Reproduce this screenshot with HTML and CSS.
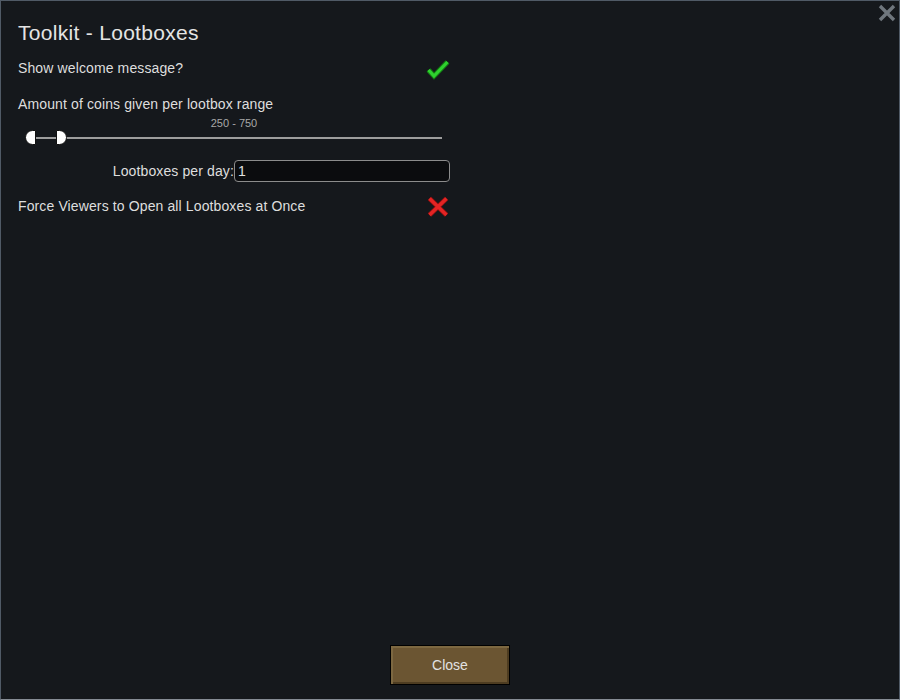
FILE: index.html
```html
<!DOCTYPE html>
<html>
<head>
<meta charset="utf-8">
<title>Toolkit - Lootboxes</title>
<link rel="stylesheet" href="styles.css">
</head>
<body>
<div class="window">
  <button class="close-x" aria-label="Close">
    <svg width="18" height="18" viewBox="0 0 18 18"><path d="M2 2 L16 16 M16 2 L2 16" stroke="#6f767d" stroke-width="3.4" stroke-linecap="butt"/></svg>
  </button>
  <div class="content">
    <h1 class="title">Toolkit - Lootboxes</h1>
    <div class="row row-first">
      <span class="label">Show welcome message?</span>
      <svg class="icon" width="24" height="24" viewBox="0 0 24 24">
        <polyline points="2.5,14 8,20 21.5,6" fill="none" stroke="#137a13" stroke-width="5.2" stroke-linejoin="miter"/>
        <polyline points="2.5,14 8,20 21.5,6" fill="none" stroke="#2fd12f" stroke-width="3.2" stroke-linejoin="miter"/>
      </svg>
    </div>
    <div class="row row-gap">
      <span class="label">Amount of coins given per lootbox range</span>
    </div>
    <div class="range-value">250 - 750</div>
    <svg class="slider" width="418" height="15" viewBox="0 0 418 15">
      <rect x="1" y="7" width="416" height="2" fill="#9d9d9d"/>
      <path d="M10.5 0.5 H7.5 A7 7 0 0 0 7.5 14.5 H10.5 Z" fill="#ffffff" stroke="#111" stroke-width="1"/>
      <path d="M31.5 0.5 H34.5 A7 7 0 0 1 34.5 14.5 H31.5 Z" fill="#ffffff" stroke="#111" stroke-width="1"/>
    </svg>
    <div class="field-row">
      <label class="field-label">Lootboxes per day:</label>
      <div class="input">1</div>
    </div>
    <div class="row row-gap">
      <span class="label">Force Viewers to Open all Lootboxes at Once</span>
      <svg class="icon" width="24" height="24" viewBox="0 0 24 24">
        <path d="M3.5 4.5 L20.5 21 M20.5 4.5 L3.5 21" stroke="#8a1010" stroke-width="5" fill="none"/>
        <path d="M3.5 4.5 L20.5 21 M20.5 4.5 L3.5 21" stroke="#e42424" stroke-width="3.4" fill="none"/>
      </svg>
    </div>
  </div>
  <div class="footer">
    <button class="btn">Close</button>
  </div>
</div>
</body>
</html>
```

FILE: styles.css
```css
* { box-sizing: border-box; }
html, body {
  margin: 0;
  padding: 0;
  background: #15181c;
}
body {
  font-family: "Liberation Sans", Arial, sans-serif;
  color: #dedede;
}
.window {
  position: relative;
  width: 900px;
  height: 700px;
  background: #15181c;
  border: 1px solid #505a66;
  border-bottom-color: #868c94;
  display: flex;
  flex-direction: column;
}
.close-x {
  position: absolute;
  top: 3px;
  right: 3px;
  width: 18px;
  height: 18px;
  padding: 0;
  border: 0;
  background: transparent;
  display: block;
}
.close-x svg { display: block; }
.content {
  padding: 20px 0 0 17px;
  width: 450px;
  display: flex;
  flex-direction: column;
}
.title {
  margin: 0;
  font-size: 21px;
  line-height: 24px;
  height: 24px;
  font-weight: normal;
  letter-spacing: 0.3px;
  color: #e4e4e4;
}
.row {
  display: flex;
  justify-content: space-between;
  align-items: flex-start;
  width: 432px;
  height: 24px;
  font-size: 14px;
  line-height: 24px;
  letter-spacing: 0.12px;
}
.row-first { margin-top: 11px; }
.row-gap { margin-top: 12px; }
.icon { display: block; flex: none; }
.range-value {
  margin-top: 1px;
  width: 432px;
  text-align: center;
  font-size: 11px;
  line-height: 12px;
  height: 12px;
  color: #a8a8a8;
}
.slider {
  display: block;
  margin-top: 1px;
  margin-left: 7px;
}
.field-row {
  margin-top: 15px;
  display: flex;
  align-items: stretch;
  height: 22px;
  width: 432px;
}
.field-label {
  width: 216px;
  flex: none;
  text-align: right;
  font-size: 14px;
  line-height: 22px;
  letter-spacing: 0.12px;
}
.input {
  flex: 1;
  border: 1px solid #8c8c8c;
  border-radius: 4px;
  background: #0b0c0e;
  font-size: 14px;
  line-height: 20px;
  padding-left: 3px;
  color: #e0e0e0;
}
.footer {
  margin-top: auto;
  display: flex;
  justify-content: center;
  padding-bottom: 14px;
}
.btn {
  width: 120px;
  height: 40px;
  border: 1px solid #000;
  background: #6b5532;
  box-shadow: inset 2px 2px 0 #7d6841, inset -2px -2px 0 #4d3c21;
  color: #e2e2e2;
  font-family: "Liberation Sans", Arial, sans-serif;
  font-size: 14px;
  padding: 0;
}
```
